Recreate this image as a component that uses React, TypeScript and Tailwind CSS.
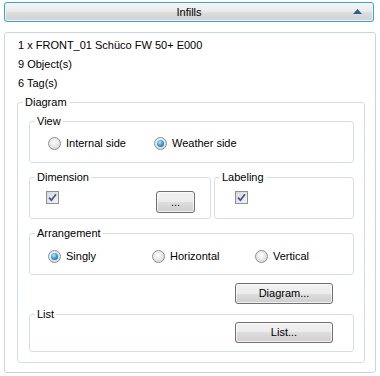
import type { ReactNode } from 'react'

function GroupBox({ label, className, children }: { label: string, className?: string, children?: ReactNode }) {
    return (
        <div className={`relative border border-[#d5dfe6] rounded-[3px] ${className ?? ''}`}>
            {/* caption sits over the top border */}
            <span className="absolute -top-[7px] left-[5px] px-[2px] bg-white leading-[13px]">{label}</span>
            {children}
        </div>
    )
}

function Radio({ checked, label, width }: { checked?: boolean, label: string, width: string }) {
    return (
        <div className={`flex items-center h-[15px] ${width}`}>
            <span className="w-[13px] h-[13px] rounded-full border border-[#8d9091] bg-[radial-gradient(circle_at_45%_40%,#ffffff_0%,#e9e9e9_45%,#c9c9c9_100%)] flex items-center justify-center shrink-0">
                {checked && (
                    <span className="w-[7px] h-[7px] rounded-full bg-[radial-gradient(circle_at_40%_35%,#b8ecff_0%,#3aa3dc_45%,#0e4f86_100%)]" />
                )}
            </span>
            <span className="ml-[5px] leading-[15px]">{label}</span>
        </div>
    )
}

function CheckBox() {
    return (
        <span className="w-[13px] h-[13px] border border-[#8f9092] bg-[linear-gradient(135deg,#d6d8db,#f3f3f4)] flex items-center justify-center">
            <svg width="9" height="9" viewBox="0 0 9 9">
                <path d="M1 4.6 L3.4 7.2 L8 1.2" fill="none" stroke="#41568e" strokeWidth="1.7" />
            </svg>
        </span>
    )
}

function Button({ label, size }: { label: string, size: string }) {
    return (
        <button className={`${size} border border-[#707070] rounded-[3px] bg-[linear-gradient(to_bottom,#f2f2f2_0%,#ebebeb_50%,#dddddd_50%,#cfcfcf_100%)] shadow-[inset_0_0_0_1px_rgba(255,255,255,0.7)] flex items-center justify-center leading-[13px] text-black`}>
            {label}
        </button>
    )
}

export default function App() {
    return (
        <div className="w-[380px] h-[376px] bg-white text-black text-[11px] font-['Liberation_Sans',Arial,sans-serif] pt-[2px] pl-[4px]">

            {/* Header bar */}
            <div className="relative w-[370px] h-[20px] rounded-[3px] border border-[#37a0de] shadow-[inset_0_0_0_1px_rgba(255,255,255,0.75)] bg-[linear-gradient(to_bottom,#f5f5f5_0%,#ebebeb_45%,#dcdcdc_55%,#d2d2d2_100%)] flex items-center justify-center">
                <span className="leading-[13px]">Infills</span>
                <svg className="absolute right-[11px] top-[6px]" width="9" height="5" viewBox="0 0 9 5">
                    <polygon points="0,5 4.5,0 9,5" fill="#2d5e92" />
                </svg>
            </div>

            {/* Panel */}
            <div className="mt-[10px] w-[372px] h-[341px] border border-[#cad6de] rounded-[3px] pt-[2px] pl-[12px]">
                <div className="pl-[1px]">
                    <div className="leading-[20px]">1 x FRONT_01 Schüco FW 50+ E000</div>
                    <div className="leading-[19px]">9 Object(s)</div>
                    <div className="leading-[19px]">6 Tag(s)</div>
                </div>

                <GroupBox label="Diagram" className="mt-[9px] w-[348px] pt-[18px] pl-[11px] pr-[10px] pb-[10px]">
                    <GroupBox label="View" className="h-[42px] pt-[14px] pl-[18px]">
                        <div className="flex">
                            <Radio label="Internal side" width="w-[106px]" />
                            <Radio label="Weather side" width="w-[106px]" checked />
                        </div>
                    </GroupBox>

                    <div className="mt-[14px] flex gap-[3px]">
                        <GroupBox label="Dimension" className="w-[182px] h-[42px] pt-[13px] pl-[16px] pr-[15px]">
                            <div className="flex justify-between items-start">
                                <CheckBox />
                                <Button label="..." size="w-[39px] h-[22px]" />
                            </div>
                        </GroupBox>
                        <GroupBox label="Labeling" className="w-[140px] h-[42px] pt-[13px] pl-[20px]">
                            <CheckBox />
                        </GroupBox>
                    </div>

                    <GroupBox label="Arrangement" className="mt-[14px] h-[42px] pt-[15px] pl-[18px]">
                        <div className="flex">
                            <Radio label="Singly" width="w-[106px]" checked />
                            <Radio label="Horizontal" width="w-[105px]" />
                            <Radio label="Vertical" width="w-[100px]" />
                        </div>
                    </GroupBox>

                    <div className="mt-[8px] flex justify-end pr-[21px]">
                        <Button label="Diagram..." size="w-[98px] h-[21px]" />
                    </div>

                    <GroupBox label="List" className="mt-[10px] h-[38px] pt-[7px] pr-[20px] flex justify-end items-start">
                        <Button label="List..." size="w-[98px] h-[21px]" />
                    </GroupBox>
                </GroupBox>
            </div>
        </div>
    )
}
